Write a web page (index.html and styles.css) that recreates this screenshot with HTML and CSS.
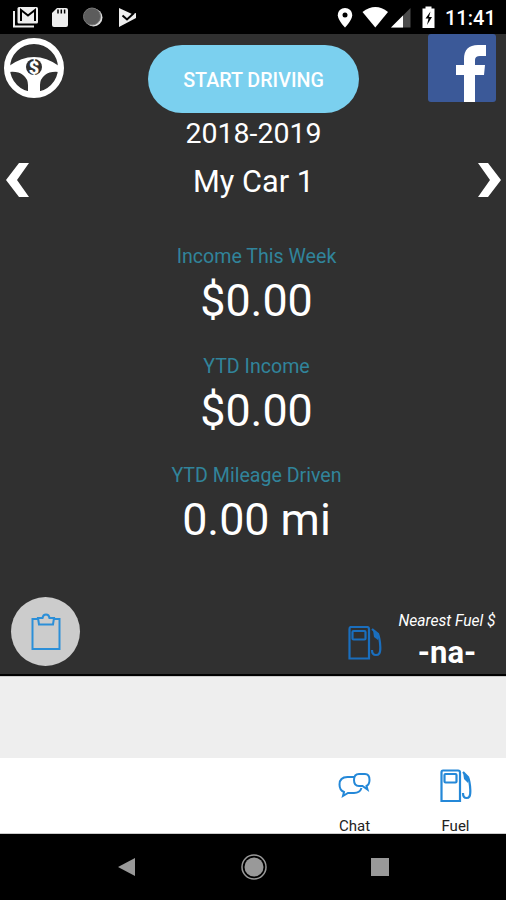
FILE: index.html
```html
<!DOCTYPE html>
<html lang="en">
<head>
    <meta charset="UTF-8">
    <meta name="viewport" content="width=device-width, initial-scale=1.0">
    <title>Start Driving</title>
    <link rel="stylesheet" href="styles.css">
</head>
<body>
    <div class="status-bar">
        <svg class="status-icons" width="140" height="34" viewBox="0 0 140 34">
            <path d="M14 11v15.500h20" fill="none" stroke="#eee" stroke-width="2"/>
            <rect x="17.500" y="7" width="20.500" height="16.500" rx="1.500" fill="#eee"/>
            <path d="M21 21V10l7 5.500 7-5.500v11" fill="none" stroke="#000" stroke-width="2"/>
            <path d="M57 8h9q2 0 2 2v15q0 2-2 2H54q-2 0-2-2V13z" fill="#eee"/>
            <path d="M58 9.500v4M61.300 9.500v4M64.600 9.500v4" stroke="#000" stroke-width="1.500"/>
            <circle cx="93.500" cy="17.500" r="9" fill="#ddd"/>
            <circle cx="92" cy="16.500" r="8.500" fill="#5c5c5c" stroke="#777" stroke-width="1"/>
            <path d="M119 8l13 6 4-1v5l-17 9z" fill="#eee"/>
            <path d="M122.500 15.500l4.500 4 7-6.500" fill="none" stroke="#000" stroke-width="2"/>
        </svg>
        <div class="status-right">
            <svg width="104" height="34" viewBox="334 0 104 34">
                <path d="M345 8c-4 0-7.200 3-7.200 7.200 0 5 7.200 12.300 7.200 12.300s7.200-7.300 7.200-12.300C352.200 11 349 8 345 8z" fill="#fff"/>
                <circle cx="345" cy="15" r="2.500" fill="#000"/>
                <path d="M362.500 12q13-10 25.500 0L375.300 27.500z" fill="#fff"/>
                <path d="M410.500 8v19.500H391z" fill="#4c4c4c"/>
                <path d="M403 15.500v12h-12z" fill="#fff"/>
                <path d="M422.500 8.500h3V6.500h6v2h3v19.500h-12z" fill="#fff"/>
                <path d="M430.500 11.500l-5 7h3l-1.500 6.500 5-8h-3z" fill="#000"/>
            </svg>
            <span class="clock">11:41</span>
        </div>
    </div>

    <div class="dashboard">
        <div class="top">
            <svg class="wheel" width="62" height="62" viewBox="0 0 62 62">
                <circle cx="31" cy="31" r="27" fill="none" stroke="#fff" stroke-width="6"/>
                <path d="M6 29Q31 11 56 29v6q-9-1-14 3-5 4-5 10v11H25V48q0-6-5-10-5-4-14-3z" fill="#fff"/>
                <circle cx="31" cy="30" r="8" fill="#303030"/>
                <text x="31" y="36.500" class="wheel-sign">$</text>
            </svg>
            <button class="start">START DRIVING</button>
            <svg class="facebook" width="68" height="68" viewBox="0 0 68 68">
                <rect width="68" height="68" rx="3" fill="#3b5998"/>
                <path d="M36 68V41h-8V31h8v-6q0-14 14-14h8v11h-6q-5 0-5 4v5h10l-1 10h-9v27z" fill="#fff"/>
            </svg>
        </div>
        <div class="year">2018-2019</div>
        <div class="car">
            <svg width="24" height="36" viewBox="0 0 24 36">
                <path d="M0 18L13 1h10L11 18l12 17H13z" fill="#fff"/>
            </svg>
            <span>My Car 1</span>
            <svg width="24" height="36" viewBox="0 0 24 36">
                <path d="M24 18L11 1H1l12 17L1 35h10z" fill="#fff"/>
            </svg>
        </div>

        <div class="stats">
            <div class="stat">
                <div class="label">Income This Week</div>
                <div class="value">$0.00</div>
            </div>
            <div class="stat">
                <div class="label">YTD Income</div>
                <div class="value">$0.00</div>
            </div>
            <div class="stat">
                <div class="label">YTD Mileage Driven</div>
                <div class="value">0.00 mi</div>
            </div>
        </div>

        <div class="bottom">
            <div class="clipboard">
                <svg width="30" height="38" viewBox="0 0 30 38" fill="none" stroke="#2c8fd8" stroke-width="2">
                    <path d="M7 6H1.500v30H28.500V6H23"/>
                    <path d="M7 5h4.500q.5-3.500 3.500-3.500T18.500 5H23l-1 6.500H8z"/>
                </svg>
            </div>
            <svg class="pump" width="34" height="34" viewBox="0 0 34 34" fill="none" stroke="#1a6ebd" stroke-width="2.200">
                <path d="M3 1h16q2 0 2 2v29.500H1.500V3q0-2 1.500-2z"/>
                <rect x="4.500" y="5" width="13" height="8.500" rx="1"/>
                <path d="M24 3l6 5q2 5 2.300 13c.3 7-1.800 8-4.300 8s-4-2-4-5"/>
                <path d="M25 4l5 4v6l-4-3z" fill="#1a6ebd" stroke="none"/>
            </svg>
            <div class="nearest">
                <div class="nearest-label">Nearest Fuel $</div>
                <div class="nearest-value">-na-</div>
            </div>
        </div>
    </div>

    <div class="banner"></div>

    <div class="tabs">
        <div class="tab">
            <svg width="34" height="34" viewBox="0 0 34 34" fill="none" stroke="#2488d8" stroke-width="2">
                <path d="M16 8H9.500C4 8 1.500 11 1.500 15.500c0 4 2 6.500 4.500 7.500l-1 4 5-3H16c4 0 6.500-2 7.500-5"/>
                <path d="M21 5h6c3 0 4.500 2.500 4.500 6 0 3-1 5-3 6l1 3.500-5-3.500h-3.500c-3 0-5-2-5-6s2-6 5-6z"/>
            </svg>
            <span>Chat</span>
        </div>
        <div class="tab">
            <svg width="34" height="34" viewBox="0 0 34 34" fill="none" stroke="#2488d8" stroke-width="2.200">
                <path d="M4 1.500h15q2 0 2 2v28.500H2.500v-28.500q0-2 1.500-2z"/>
                <rect x="5.500" y="5" width="12" height="8.500" rx="1"/>
                <path d="M24 3l5 5q2 5 2.300 13c.3 7-1.500 8-3.800 8s-3.500-2-3.500-5"/>
                <path d="M24 3l5 5v6l-4-4z" fill="#2488d8" stroke="none"/>
            </svg>
            <span>Fuel</span>
        </div>
    </div>

    <div class="nav-bar">
        <svg width="18" height="20" viewBox="0 0 18 20"><path d="M0 10L17 1v18z" fill="#999"/></svg>
        <svg width="28" height="28" viewBox="0 0 28 28">
            <circle cx="14" cy="14" r="12" fill="none" stroke="#999" stroke-width="1.500"/>
            <circle cx="14" cy="14" r="9.500" fill="#999"/>
        </svg>
        <svg width="18" height="18" viewBox="0 0 18 18"><rect width="18" height="18" fill="#999"/></svg>
    </div>
</body>
</html>
```
FILE: styles.css
```css
* {
    box-sizing: border-box;
}
body {
    margin: 0;
    width: 506px;
    height: 900px;
    background-color: #000000;
    font-family: Roboto, sans-serif;
    overflow: hidden;
}
svg {
    display: block;
    flex: none;
}
.status-bar {
    display: flex;
    justify-content: space-between;
    height: 34px;
    padding-right: 11px;
}
.status-right {
    display: flex;
    align-items: center;
}
.clock {
    width: 50px;
    margin-left: 7px;
    padding-top: 2px;
    color: #ffffff;
    font-size: 20px;
    font-weight: 500;
    line-height: 32px;
    white-space: nowrap;
}
.dashboard {
    height: 642px;
    background-color: #303030;
    border-bottom: 2px solid #000000;
    color: #ffffff;
}
.top {
    display: flex;
    justify-content: space-between;
    height: 80px;
    padding: 0 10px 0 3px;
}
.wheel {
    margin-top: 3px;
}
.wheel-sign {
    font-size: 18px;
    font-weight: 900;
    text-anchor: middle;
    fill: #ffffff;
}
.start {
    width: 211px;
    height: 68px;
    margin: 11px 0 0 14px;
    padding: 2px 0 0;
    border: none;
    border-radius: 34px;
    background-color: #7bd0ef;
    color: #ffffff;
    font-family: inherit;
    font-size: 19.700px;
    font-weight: 500;
}
.year {
    height: 39px;
    padding-left: 1px;
    font-size: 28.500px;
    line-height: 39px;
    text-align: center;
}
.car {
    display: flex;
    justify-content: space-between;
    align-items: center;
    height: 54px;
    padding: 0 5px 0 6px;
    font-size: 30.700px;
}
.car span {
    padding-top: 2px;
}
.stats {
    height: 358px;
    padding: 37px 0 0 7px;
    text-align: center;
}
.stat {
    height: 109.500px;
}
.label {
    color: #31849b;
    font-size: 19.600px;
    line-height: 26px;
}
.value {
    font-size: 44.800px;
    line-height: 62px;
}
.bottom {
    display: flex;
    align-items: flex-start;
    padding: 32px 5px 0 11px;
}
.clipboard {
    display: flex;
    justify-content: center;
    align-items: center;
    width: 69px;
    height: 69px;
    border-radius: 50%;
    background-color: #cccccc;
}
.pump {
    margin: 29px 0 0 268px;
}
.nearest {
    flex: 1;
    padding: 14px 0 0 11px;
    text-align: center;
    white-space: nowrap;
}
.nearest-label {
    font-size: 15.600px;
    font-style: italic;
    line-height: 20px;
}
.nearest-value {
    font-size: 31px;
    font-weight: 700;
    line-height: 43px;
}
.banner {
    height: 82px;
    background-color: #eeeeee;
    border-top: 1px solid #cccccc;
}
.tabs {
    display: flex;
    justify-content: flex-end;
    height: 76px;
    background-color: #ffffff;
    border-bottom: 1px solid #cccccc;
    overflow: hidden;
}
.tab {
    display: flex;
    flex-direction: column;
    align-items: center;
    width: 101px;
    padding-top: 11px;
    color: #222222;
    font-size: 15px;
}
.tab span {
    margin-top: 14px;
    line-height: 18px;
}
.nav-bar {
    display: flex;
    justify-content: space-between;
    align-items: center;
    height: 66px;
    padding: 0 117px 0 118px;
}
```
